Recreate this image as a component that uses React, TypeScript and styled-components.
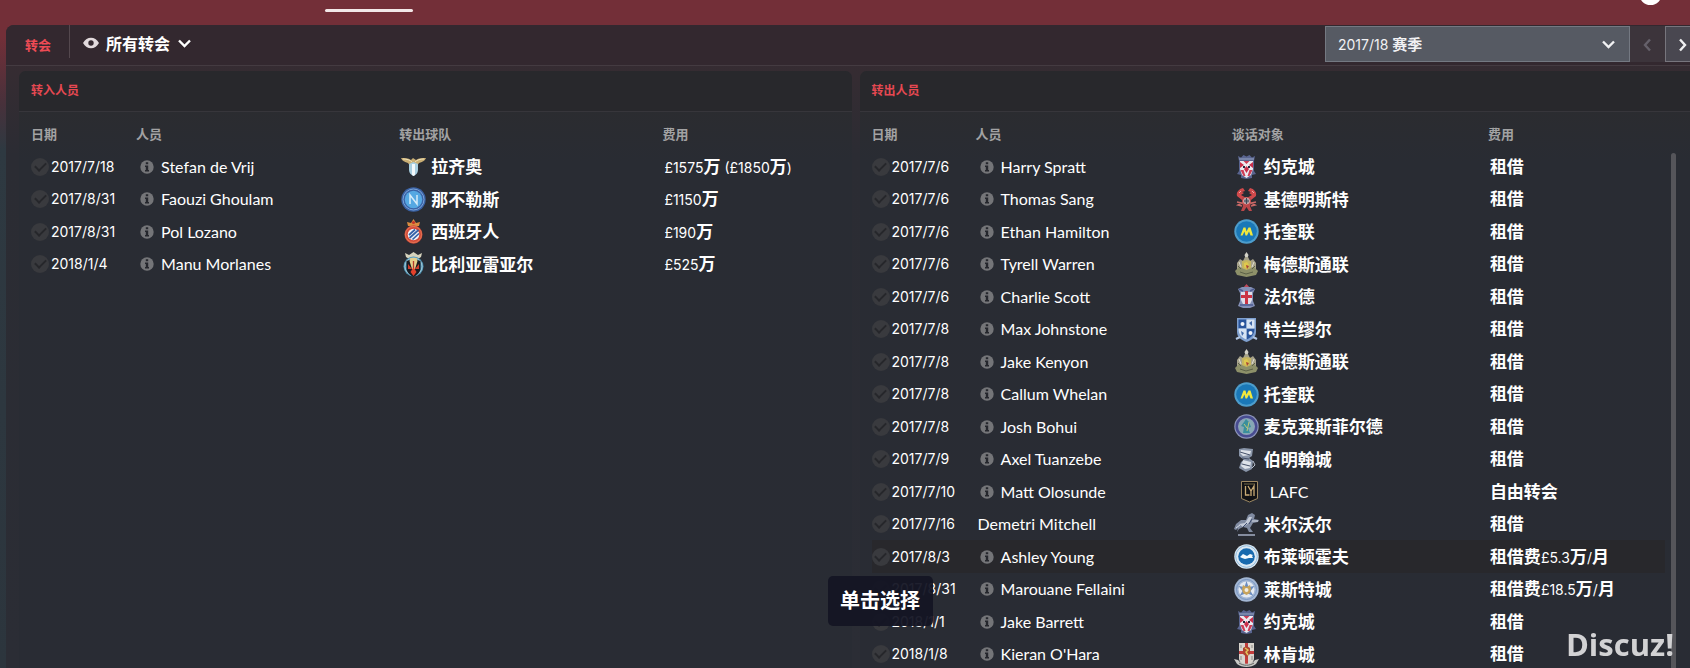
import React from 'react';
import styled, { createGlobalStyle } from 'styled-components';

const NAME_FONT = `Lato, "Noto Sans CJK SC", sans-serif`;
const FIGURE_FONT = `Inter, "Noto Sans CJK SC", sans-serif`;
const CJK_FONT = `"Noto Sans CJK SC", sans-serif`;

const GlobalStyle = createGlobalStyle`
  * { box-sizing: border-box; }
  html { background: #2c353d; }
  body { margin: 0; color: #fff; font-family: ${NAME_FONT}; font-size: 16px; }
`;

const Page = styled.div`
  display: flex;
  flex-direction: column;
  height: 100vh;
  overflow: hidden;
  background: linear-gradient(#732f38 0, #732f38 36px, #47313b 105px, #2e3941 150px, #2c353d 100%);
`;

const TopBar = styled.header`
  flex: none;
  height: 25px;
  display: flex;
  align-items: flex-start;
  justify-content: space-between;
  padding: 0 28px 0 325px;
  overflow: hidden;
`;

const ActiveTabMark = styled.span`
  width: 88px;
  height: 3px;
  margin-top: 9px;
  border-radius: 2px;
  background: #f3e8e8;
`;

const Badge = styled.span`
  width: 23px;
  height: 23px;
  margin-top: -18px;
  border-radius: 50%;
  background: #fff;
`;

const Shell = styled.main`
  flex: 1;
  min-height: 0;
  display: flex;
  flex-direction: column;
  margin-left: 6px;
  border-top-left-radius: 8px;
  overflow: hidden;
  background: linear-gradient(#372b32 0, #352c32 50px, #2b2c33 130px, #2b2d35 100%);
`;

const Toolbar = styled.div`
  flex: none;
  height: 41px;
  display: flex;
  align-items: flex-start;
  background: #33282f;
  border-bottom: 1px solid #443b41;
`;

const SectionName = styled.h1`
  margin: 0;
  width: 64px;
  height: 33px;
  padding: 8px 0 0 19px;
  border-right: 1px solid #54484e;
  color: #ee4b55;
  font: 700 13px/24px ${CJK_FONT};
`;

const FilterButton = styled.button`
  display: flex;
  align-items: center;
  gap: 7px;
  height: 36px;
  margin-left: 13px;
  padding: 0;
  border: 0;
  background: none;
  color: #fff;
  font: 700 16px/24px ${CJK_FONT};
`;

const SeasonTools = styled.div`
  display: flex;
  margin: 1px -10px 0 auto;
`;

const SeasonPicker = styled.label`
  position: relative;
  display: flex;
  align-items: center;
  justify-content: space-between;
  width: 305px;
  height: 36px;
  padding: 0 13px 0 12px;
  border: 1px solid #747982;
  background: #565a63;
  color: #f1f1f3;
  font: 400 14px/20px ${FIGURE_FONT};
`;

const SeasonSelect = styled.select`
  position: absolute;
  inset: 0;
  width: 100%;
  opacity: 0;
`;

const StepButton = styled.button`
  display: grid;
  place-items: center;
  flex: none;
  width: 35px;
  height: 36px;
  padding: 0;
  color: #f0f0f2;
  background: #494750;
  border: 1px solid #77757d;

  &:disabled {
    color: #65606a;
    background: #3c343b;
    border-color: #3c343b;
  }
`;

const Panels = styled.div`
  flex: 1;
  min-height: 0;
  display: grid;
  grid-template-columns: minmax(0, 832fr) minmax(0, 830fr);
  gap: 8px;
  padding: 5px 0 0 13px;
`;

const Panel = styled.section<{ $bleed?: boolean }>`
  border-radius: ${p => (p.$bleed ? '7px 0 0 0' : '7px 7px 0 0')};
  background: linear-gradient(#2b2c30 40px, #292c33 90px, #292c34 100%);
`;

const PanelTitle = styled.h2`
  margin: 0;
  height: 41px;
  padding: 7px 12px 0;
  border-bottom: 1px solid #37363b;
  border-radius: inherit;
  background: #28282c;
  color: #e64852;
  font: 700 12px/24px ${CJK_FONT};
`;

const PanelBody = styled.div<{ $scroll?: boolean }>`
  display: flex;
  align-items: flex-start;
  padding: 0 ${p => (p.$scroll ? '14px' : '15px')} 0 12px;
`;

const ScrollTrack = styled.div`
  flex: none;
  width: 5px;
  height: 540px;
  margin: 41px 0 0 6px;
  border-radius: 3px 3px 0 0;
  background: #55555a;
`;

const Table = styled.table`
  flex: 1;
  width: 100%;
  table-layout: fixed;
  border-collapse: collapse;
`;

const Col = styled.col<{ $w: number }>`
  width: ${p => p.$w}px;
`;

const Th = styled.th`
  height: 38px;
  padding: 5px 0 0;
  text-align: left;
  color: #a2a2a3;
  font: 700 13px/20px ${CJK_FONT};
`;

const Row = styled.tr<{ $hovered?: boolean }>`
  height: 33px;
  &:nth-child(even) { height: 32px; }
  background: ${p => (p.$hovered ? '#28282c' : 'transparent')};
`;

const Td = styled.td`
  position: relative;
  padding: 0;
  white-space: nowrap;
`;

const Line = styled.span<{ $gap?: number; $inset?: number }>`
  display: flex;
  align-items: center;
  gap: ${p => p.$gap ?? 0}px;
  padding-left: ${p => p.$inset ?? 0}px;
  line-height: 24px;
`;

const DateLabel = styled.label`
  display: flex;
  align-items: center;
  gap: 2px;
  font: 400 14px/24px ${FIGURE_FONT};
`;

const Tick = styled.input`
  appearance: none;
  flex: none;
  display: grid;
  place-items: center;
  width: 18px;
  height: 18px;
  margin: 0;
  border-radius: 50%;
  background: #393a3e;

  &::after {
    content: '';
    width: 9px;
    height: 5px;
    margin-top: -3px;
    border: solid #26272b;
    border-width: 0 0 2px 2px;
    transform: rotate(-45deg);
  }
`;

const Fee = styled.span`
  display: block;
  padding-left: 2px;
  font: 400 14px/24px ${FIGURE_FONT};
`;

const Han = styled.b<{ $size: number }>`
  font: 700 ${p => p.$size}px/24px ${CJK_FONT};
`;

const Tooltip = styled.div`
  position: absolute;
  z-index: 2;
  top: 3px;
  left: -44px;
  width: 105px;
  height: 50px;
  padding: 12px 0;
  border-radius: 5px;
  background: rgba(20, 21, 36, 0.95);
  text-align: center;
  font: 700 20px/24px ${CJK_FONT};
`;

const Watermark = styled.div`
  position: fixed;
  right: 16px;
  bottom: 4px;
  color: #d2d2d4;
  font: 700 31px/40px "Open Sans", sans-serif;
`;

/** Sets Han characters in the bold face and leaves figures and Latin light. */
function Mixed({ text, size = 17 }: { text: string; size?: number }) {
  return (
    <>
      {text.split(/([\u4e00-\u9fff]+)/).filter(Boolean).map((part, i) =>
        /[\u4e00-\u9fff]/.test(part) ? <Han key={i} $size={size}>{part}</Han> : part
      )}
    </>
  );
}

function Chevron({ dir }: { dir: 'down' | 'left' | 'right' }) {
  const d = { down: 'M2 4.500 7.500 10 13 4.500', left: 'M10 2.500 5 8 10 13.500', right: 'M5 2.500 10 8 5 13.500' }[dir];
  return (
    <svg width="15" height="15" viewBox="0 0 15 15" fill="none" stroke="currentColor" strokeWidth="2.4">
      <path d={d} />
    </svg>
  );
}

const Eye = () => (
  <svg width="16" height="12" viewBox="0 0 16 12">
    <path d="M0 6C2 2.500 4.800.700 8 .7s6 1.800 8 5.300c-2 3.500-4.800 5.300-8 5.300S2 9.500 0 6z" fill="#e2dadd" />
    <circle cx="8" cy="6" r="2.700" fill="#33282f" />
  </svg>
);

const Info = () => (
  <svg width="14" height="14" viewBox="0 0 14 14">
    <circle cx="7" cy="7" r="6.700" fill="#747578" />
    <path d="M5.800 2.300h2.400v2H5.800zM5 5.600h3.200v4.500H9v1.500H5v-1.500h.8V7H5z" fill="#25272d" />
  </svg>
);

type CrestName =
  | 'lazio' | 'napoli' | 'espanyol' | 'villarreal' | 'york' | 'kidderminster' | 'torquay' | 'maidstone'
  | 'fylde' | 'tranmere' | 'macclesfield' | 'birmingham' | 'lafc' | 'millwall' | 'brighton' | 'leicester' | 'lincoln';

const crests: Record<CrestName, React.ReactNode> = {
  lazio: (
    <>
      <path d="M0 4c4 0 7 0 10 2l2-2 3 2c3-2 6-2 10-2-1 3-4 4-7 5l-2 3H9L7 9C4 8 1 7 0 4z" fill="#c9ae74" />
      <path d="M2 5c4 0 7 1 9 3M23 5c-4 0-7 1-9 3" stroke="#f0e2b8" fill="none" />
      <path d="M8 10l4.500-2 4.500 2v6c0 3-2 5-4.500 6C10 21 8 19 8 16z" fill="#a9cfe0" />
      <path d="M11 10h3v11l-1.500 1-1.500-1z" fill="#f2f8fa" />
    </>
  ),
  napoli: (
    <>
      <circle cx="12.500" cy="12.500" r="12.200" fill="#3a62a5" />
      <circle cx="12.500" cy="12.500" r="10.500" fill="none" stroke="#7ba4d8" />
      <circle cx="12.500" cy="12.500" r="8.700" fill="#55a8e2" />
      <path d="M9 17V8l7 9V8" fill="none" stroke="#d5ebf8" strokeWidth="1.500" />
    </>
  ),
  espanyol: (
    <>
      <path d="M7 7L6 3l4 1 2.500-4L15 4l4-1-1 4z" fill="#d98c3f" />
      <circle cx="12.500" cy="3.500" r="1.500" fill="#c43329" />
      <ellipse cx="12.500" cy="15.500" rx="9" ry="9.300" fill="#d34a39" />
      <circle cx="12.500" cy="15.500" r="5.800" fill="#eef1f6" />
      <path d="M8 16l6-5.500M8.500 19l9-8M11.500 20.500l6.500-6" stroke="#3561a8" strokeWidth="1.700" />
      <circle cx="12.500" cy="15.500" r="8" fill="none" stroke="#e88c63" strokeWidth=".7" />
    </>
  ),
  villarreal: (
    <>
      <path d="M5 5L4 1l4 2 4.500-3L17 3l4-2-1 4-3 2H8z" fill="#d5d3bd" />
      <circle cx="12.500" cy="14.500" r="10" fill="#4f95b5" />
      <circle cx="12.500" cy="14.500" r="8.600" fill="none" stroke="#bfd9e2" strokeWidth=".8" />
      <path d="M5.500 9l7-2 7 2v7c0 4-3 7-7 9-4-2-7-5-7-9z" fill="#191b22" />
      <path d="M9.500 6h6l1 3-2.500 8h-3L8.500 9z" fill="#e6cf8a" />
      <path d="M7 12l4 5H7zM18 12l-4 5h4z" fill="#cf3d2c" />
      <path d="M12.500 15l3 5-3 4-3-4z" fill="#e2412c" />
      <path d="M12.500 9v7" stroke="#b33a2b" strokeWidth="1.300" />
    </>
  ),
  york: (
    <>
      <path d="M4 2l3 1.500L9.500 1l3 1.500 3-1.500L18 3.500 21 2l-1 5v10l2 3-4 1v3l-5.500 1L7 24v-3l-4-1 2-3V7z" fill="#59648f" />
      <path d="M6 7h13v8l-2 6-4.500 3L8 21l-2-6z" fill="#eceaf0" />
      <path d="M6 8l4 3-4 3zM19 8l-4 3 4 3zM10 15l2.500-3 2.500 3-2.500 4z" fill="#c92f4b" />
      <path d="M9.500 7l3 3 3-3zM6.500 16l3 6h2l-2-6zM18.500 16l-3 6h-2l2-6z" fill="#cc3d56" />
      <path d="M9 12h2v2H9zM14 12h2v2h-2z" fill="#23263e" />
      <path d="M5 5h15" stroke="#98a6c4" />
    </>
  ),
  kidderminster: (
    <>
      <path d="M9 1C5 2 2 5 3 9l5 4 2.500-3L7 8l3-2-2-1 3-1zM16 1c4 1 7 4 6 8l-5 4-2.500-3L18 8l-3-2 2-1-3-1z" fill="#d0494b" />
      <path d="M8 10h9v6l-1 3 2 5h-3l-2.500-4-2.500 4H7l2-5-1-3z" fill="#bd474a" />
      <path d="M3 15l5 1-4 2 4 1M22 15l-5 1 4 2-4 1" stroke="#ca6967" strokeWidth="1.500" fill="none" />
      <circle cx="12.500" cy="14" r="3" fill="#8d929e" stroke="#dba9a8" />
      <path d="M5 6l2-2M20 6l-2-2" stroke="#eda9a6" />
      <path d="M12.500 11v6M10 14h5" stroke="#424955" />
    </>
  ),
  torquay: (
    <>
      <circle cx="12.500" cy="12.500" r="12.200" fill="#4d9dcc" />
      <circle cx="12.500" cy="12.500" r="10.300" fill="#1a78b8" />
      <path d="M6.500 16.500l3-8h2l1 4 2-4h2l2.500 8h-2.500L15 12.500l-2 4h-1.500l-1-4-2 4z" fill="#f1e83d" />
    </>
  ),
  maidstone: (
    <>
      <path d="M12.500 0l2 3-1 3h-2l-1-3z" fill="#d3d2c8" />
      <path d="M3 11l3-4 3 2 2-4h3l2 4 3-2 3 4v7H3z" fill="#a6a28a" />
      <path d="M8 9l4.500-1L17 9v7l-4.500 4L8 16z" fill="#c5b55f" />
      <path d="M1 19l4-4 7.500 3 7.500-3 4 4-2 4-9.500 2L3 23z" fill="#8d9069" />
      <path d="M5 10l2 5M20 10l-2 5" stroke="#e1dfd4" />
      <path d="M10 11l3-1 2 3-2 4-3-2z" fill="#dfc94d" />
      <path d="M6 20l6 2 7-2M4 14l3 3M21 14l-3 3" stroke="#5c6148" fill="none" />
      <path d="M12 13l3 1-2 3z" fill="#aa4435" />
    </>
  ),
  fylde: (
    <>
      <path d="M9 4l3.500-4L16 4z" fill="#bd495b" />
      <path d="M4 5l4-2h9l4 2-2 4v8l2 5-5 2H9l-5-2 2-5V9z" fill="#8490b6" />
      <path d="M7 8h11v8l-2 4H9l-2-4z" fill="#dedfe9" />
      <path d="M11 7h3v13h-3zM7 11h11v3H7z" fill="#ca3444" />
      <path d="M5 5l4 2M20 5l-4 2M6 21h13" stroke="#4d5c92" strokeWidth="1.500" />
    </>
  ),
  tranmere: (
    <>
      <path d="M3 1h19v14c0 5-4 8-9.500 10C7 23 3 20 3 15z" fill="#7fa0cf" />
      <path d="M4.500 2.500h8v9h-8zM12.500 11.500h8c0 6-3 9-8 11z" fill="#29559c" />
      <path d="M12.500 2.500h8v9h-8zM4.500 11.500h8v11c-5-2-8-5-8-11z" fill="#d6e3f3" />
      <circle cx="8.500" cy="7" r="2" fill="#f3f6fa" />
      <circle cx="16.500" cy="16" r="2" fill="#f3f6fa" />
      <path d="M15 6l3-2v5zM7 14l3 2-2 3z" fill="#3f68a8" />
      <path d="M2 22l4-2M23 22l-4-2" stroke="#b3c7e3" strokeWidth="2" />
    </>
  ),
  macclesfield: (
    <>
      <circle cx="12.500" cy="12.500" r="12.200" fill="#8d94b9" />
      <circle cx="12.500" cy="12.500" r="9.800" fill="none" stroke="#474c90" strokeWidth="2.500" />
      <circle cx="12.500" cy="12.500" r="8" fill="#86a8b5" />
      <path d="M9 19l1-6-3-1 3-4 2-3 3 3 2 5-3 1 2 5z" fill="#3a8f9c" />
      <path d="M10 10l3 4M15 8l-2 9" stroke="#c0c679" />
    </>
  ),
  birmingham: (
    <>
      <path d="M5 2l5-1 9 1-1 7-3 2 4 3-1 8-6 3-7-4 2-6 3-2-5-4z" fill="#8995a9" />
      <path d="M7 3l10 1-1 4-7 1-3-3zM9 13l8 2-1 6-5 1-4-3z" fill="#dee3ea" />
      <path d="M6 5l10 3M8 11l7 1M8 17l8 2" stroke="#445068" />
      <path d="M19 14l2 4-3 3" stroke="#b9c1cf" fill="none" />
    </>
  ),
  lafc: (
    <>
      <path d="M4.500 2.500h16v17l-8 3.500-8-3.500z" fill="#111215" stroke="#9d8862" />
      <path d="M7 5h11" stroke="#756849" />
      <path d="M8.500 7v9h4M11 7l3 5 3-5v10M14 17v-5" fill="none" stroke="#c9ab75" strokeWidth="1.300" />
    </>
  ),
  millwall: (
    <>
      <path d="M0 17l2-5 5-4 5 0 2-5 4-2 3 2-1 4 5 1-1 2-5 1-3 5 3 4h-4l-2-4-4-1-4 2-2 3H3l1-4-2 2z" fill="#808ba1" />
      <path d="M5 12l6-1 4-6 3 0-3 6-6 4z" fill="#c4cbd8" />
      <path d="M18 9h6M2 16l4-3" stroke="#d5dae3" />
      <path d="M9 15l4-4M15 12l3-5" stroke="#3e4d70" />
      <path d="M4 23h17" stroke="#858da0" strokeWidth="2" />
    </>
  ),
  brighton: (
    <>
      <circle cx="12.500" cy="12.500" r="12.200" fill="#dbe9f4" />
      <circle cx="12.500" cy="12.500" r="10.800" fill="none" stroke="#93bcdc" />
      <circle cx="12.500" cy="12.500" r="8.300" fill="#186aae" />
      <path d="M6 13l3-3 4 2 3-2 3 1-1 1 1 2h-4l-4 1-3-1z" fill="#f4fafd" />
    </>
  ),
  leicester: (
    <>
      <circle cx="12.500" cy="12.500" r="12.200" fill="#a3b7d4" />
      <circle cx="12.500" cy="12.500" r="10" fill="none" stroke="#7795c2" />
      <circle cx="12.500" cy="12.500" r="8" fill="#e4eaf2" />
      <path d="M12.500 4l2 6 6-1-4 5 3 5-7-3-7 3 3-5-4-5 6 1z" fill="#6a8cc0" />
      <path d="M9 8l3.500 2L16 8l1 4-1 4-3.500 2L9 16l-1-4z" fill="#c8a45c" />
      <circle cx="12.500" cy="13" r="2" fill="#f1eee3" />
    </>
  ),
  lincoln: (
    <>
      <path d="M5 1h15v15c0 4-3 6-7.500 7C8 22 5 20 5 16z" fill="#d8d4cd" />
      <path d="M11 1h3v22h-3zM5 9h15v3H5z" fill="#c23d3d" />
      <path d="M9 6l3.500-2L16 6v6l-3.500 3L9 12z" fill="#ad4431" />
      <path d="M11 6l3 2-2 2 2 3" fill="none" stroke="#e4c65a" strokeWidth="1.500" />
      <path d="M7 3v3M18 3v3M7 14v4M18 14v4" stroke="#8d8a86" />
      <path d="M0 17l4 1c4 5 13 5 17 0l4-1-3 5c-5 4-14 4-19 0z" fill="#c9c9c6" />
      <path d="M5 21c5 3 10 3 15 0" stroke="#646462" fill="none" />
    </>
  ),
};

const Crest = ({ name }: { name: CrestName }) => (
  <svg width="25" height="25" viewBox="0 0 25 25">{crests[name]}</svg>
);

interface Transfer {
  date: string;
  person: string;
  club: string;
  crest: CrestName;
  fee: string;
  plain?: boolean;
  hovered?: boolean;
  tip?: string;
}

const arrivals: Transfer[] = [
  { date: '2017/7/18', person: 'Stefan de Vrij', club: '拉齐奥', crest: 'lazio', fee: '£1575万 (£1850万)' },
  { date: '2017/8/31', person: 'Faouzi Ghoulam', club: '那不勒斯', crest: 'napoli', fee: '£1150万' },
  { date: '2017/8/31', person: 'Pol Lozano', club: '西班牙人', crest: 'espanyol', fee: '£190万' },
  { date: '2018/1/4', person: 'Manu Morlanes', club: '比利亚雷亚尔', crest: 'villarreal', fee: '£525万' },
];

const departures: Transfer[] = [
  { date: '2017/7/6', person: 'Harry Spratt', club: '约克城', crest: 'york', fee: '租借' },
  { date: '2017/7/6', person: 'Thomas Sang', club: '基德明斯特', crest: 'kidderminster', fee: '租借' },
  { date: '2017/7/6', person: 'Ethan Hamilton', club: '托奎联', crest: 'torquay', fee: '租借' },
  { date: '2017/7/6', person: 'Tyrell Warren', club: '梅德斯通联', crest: 'maidstone', fee: '租借' },
  { date: '2017/7/6', person: 'Charlie Scott', club: '法尔德', crest: 'fylde', fee: '租借' },
  { date: '2017/7/8', person: 'Max Johnstone', club: '特兰缪尔', crest: 'tranmere', fee: '租借' },
  { date: '2017/7/8', person: 'Jake Kenyon', club: '梅德斯通联', crest: 'maidstone', fee: '租借' },
  { date: '2017/7/8', person: 'Callum Whelan', club: '托奎联', crest: 'torquay', fee: '租借' },
  { date: '2017/7/8', person: 'Josh Bohui', club: '麦克莱斯菲尔德', crest: 'macclesfield', fee: '租借' },
  { date: '2017/7/9', person: 'Axel Tuanzebe', club: '伯明翰城', crest: 'birmingham', fee: '租借' },
  { date: '2017/7/10', person: 'Matt Olosunde', club: 'LAFC', crest: 'lafc', fee: '自由转会' },
  { date: '2017/7/16', person: 'Demetri Mitchell', club: '米尔沃尔', crest: 'millwall', fee: '租借', plain: true },
  { date: '2017/8/3', person: 'Ashley Young', club: '布莱顿霍夫', crest: 'brighton', fee: '租借费£5.3万/月', hovered: true },
  { date: '2017/8/31', person: 'Marouane Fellaini', club: '莱斯特城', crest: 'leicester', fee: '租借费£18.5万/月', tip: '单击选择' },
  { date: '2018/1/1', person: 'Jake Barrett', club: '约克城', crest: 'york', fee: '租借' },
  { date: '2018/1/8', person: "Kieran O'Hara", club: '林肯城', crest: 'lincoln', fee: '租借' },
];

function TransferTable({ heads, cols, rows }: { heads: string[]; cols: number[]; rows: Transfer[] }) {
  return (
    <Table>
      <colgroup>{cols.map((w, i) => <Col key={i} $w={w} />)}</colgroup>
      <thead>
        <tr>{heads.map(h => <Th key={h} scope="col">{h}</Th>)}</tr>
      </thead>
      <tbody>
        {rows.map(r => (
          <Row key={r.person} $hovered={r.hovered}>
            <Td>
              <DateLabel><Tick type="checkbox" />{r.date}</DateLabel>
              {r.tip && <Tooltip role="tooltip">{r.tip}</Tooltip>}
            </Td>
            <Td>
              <Line $gap={7} $inset={r.plain ? 2 : 4}>{!r.plain && <Info />}{r.person}</Line>
            </Td>
            <Td>
              <Line $gap={r.crest === 'lafc' ? 8 : 5} $inset={r.crest === 'lafc' ? 5 : 2}>
                <Crest name={r.crest} /><span><Mixed text={r.club} /></span>
              </Line>
            </Td>
            <Td><Fee><Mixed text={r.fee} /></Fee></Td>
          </Row>
        ))}
      </tbody>
    </Table>
  );
}

export default function App() {
  return (
    <Page>
      <GlobalStyle />
      <TopBar>
        <ActiveTabMark />
        <Badge />
      </TopBar>
      <Shell>
        <Toolbar>
          <SectionName>转会</SectionName>
          <FilterButton type="button"><Eye />所有转会<Chevron dir="down" /></FilterButton>
          <SeasonTools>
            <SeasonPicker>
              <span><Mixed text="2017/18 赛季" size={15} /></span>
              <Chevron dir="down" />
              <SeasonSelect defaultValue="2017/18"><option value="2017/18">2017/18 赛季</option></SeasonSelect>
            </SeasonPicker>
            <StepButton type="button" disabled><Chevron dir="left" /></StepButton>
            <StepButton type="button"><Chevron dir="right" /></StepButton>
          </SeasonTools>
        </Toolbar>
        <Panels>
          <Panel>
            <PanelTitle>转入人员</PanelTitle>
            <PanelBody>
              <TransferTable heads={['日期', '人员', '转出球队', '费用']} cols={[105, 263, 263, 174]} rows={arrivals} />
            </PanelBody>
          </Panel>
          <Panel $bleed>
            <PanelTitle>转出人员</PanelTitle>
            <PanelBody $scroll>
              <TransferTable heads={['日期', '人员', '谈话对象', '费用']} cols={[104, 256, 256, 177]} rows={departures} />
              <ScrollTrack />
            </PanelBody>
          </Panel>
        </Panels>
      </Shell>
      <Watermark>Discuz!</Watermark>
    </Page>
  );
}
